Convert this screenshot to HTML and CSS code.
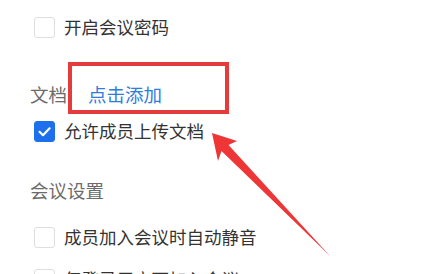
FILE: index.html
```html
<!DOCTYPE html>
<html lang="zh-CN">
<head>
<meta charset="utf-8">
<title>会议设置</title>
<link rel="stylesheet" href="styles.css">
</head>
<body>
<div class="page">
  <label class="row">
    <span class="box"></span>
    <span class="label">开启会议密码</span>
  </label>

  <section class="section section-doc">
    <div class="heading">
      <span>文档</span>
      <a class="link">点击添加</a>
    </div>
    <label class="row">
      <span class="box checked">
        <svg viewBox="0 0 21 21" width="21" height="21"><path d="M5.5 10.8 L9 14.2 L15.6 7.3" fill="none" stroke="#fff" stroke-width="2.2" stroke-linecap="round" stroke-linejoin="round"/></svg>
      </span>
      <span class="label">允许成员上传文档</span>
    </label>
  </section>

  <section class="section section-meeting">
    <div class="heading"><span>会议设置</span></div>
    <label class="row">
      <span class="box"></span>
      <span class="label">成员加入会议时自动静音</span>
    </label>
    <label class="row">
      <span class="box"></span>
      <span class="label">仅登录用户可加入会议</span>
    </label>
  </section>

  <div class="highlight"></div>
  <svg class="arrow" width="442" height="274" viewBox="0 0 442 274">
    <polygon points="212,133 237,141 228.5,145 330,256 221.5,151 218,161" fill="#ee3636"/>
  </svg>
</div>
</body>
</html>
```

FILE: styles.css
```css
html, body {
  margin: 0;
  padding: 0;
  background: #ffffff;
}

body {
  width: 442px;
  height: 274px;
  overflow: hidden;
  font-family: "Noto Sans CJK SC", "Noto Sans", sans-serif;
}

.page {
  position: relative;
  padding-top: 6px;
  height: 274px;
  box-sizing: border-box;
}

.row {
  display: flex;
  align-items: center;
  height: 42px;
  padding-left: 34px;
}

.box {
  width: 21px;
  height: 21px;
  box-sizing: border-box;
  border: 1px solid #dedede;
  border-radius: 3px;
  background: #fff;
  flex: none;
  display: flex;
}

.box.checked {
  background: #1e6fec;
  border-color: #1e6fec;
}

.box.checked svg {
  margin: -1px;
}

.label {
  margin-left: 9px;
  font-size: 17.5px;
  line-height: 24px;
  color: #333333;
}

.heading {
  display: flex;
  align-items: center;
  height: 28px;
  padding-left: 30px;
  font-size: 18.5px;
  line-height: 28px;
  color: #6b6b6b;
}

.link {
  margin-left: 21px;
  color: #2f7be0;
}

.section-doc {
  margin-top: 32px;
}

.section-doc .heading {
  margin-bottom: 2px;
}

.section-meeting {
  margin-top: 24px;
}

.section-meeting .heading {
  margin-bottom: 12px;
}

.highlight {
  position: absolute;
  left: 68px;
  top: 62px;
  width: 161px;
  height: 52px;
  box-sizing: border-box;
  border: 4px solid #e63b3b;
}

.arrow {
  position: absolute;
  left: 0;
  top: 0;
}
```
